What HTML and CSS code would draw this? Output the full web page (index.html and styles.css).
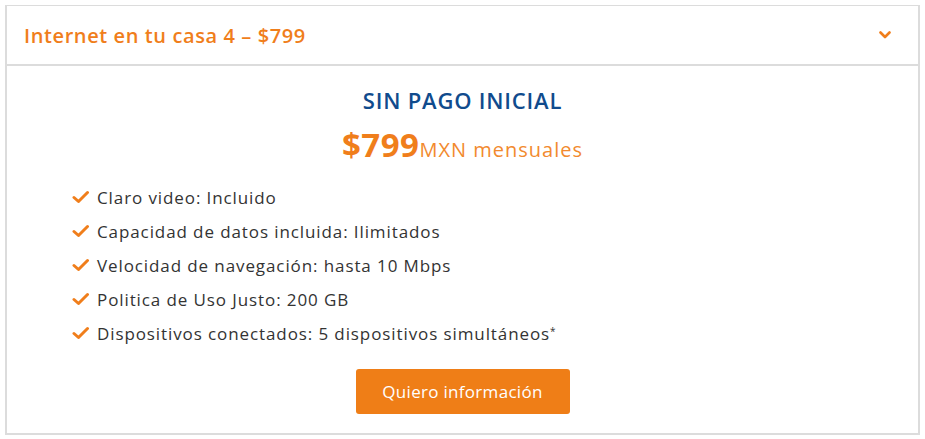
FILE: index.html
```html
<!DOCTYPE html>
<html lang="es">
<head>
<meta charset="utf-8">
<title>Internet en tu casa 4</title>
<link rel="stylesheet" href="styles.css">
</head>
<body>
<div class="accordion">
  <div class="acc-header">
    <span class="acc-title">Internet en tu casa 4 – $799</span>
    <svg class="chev" width="12" height="8" viewBox="0 0 12 8"><path d="M1.5 1.5 L6 6 L10.5 1.5" fill="none" stroke="#f07e1b" stroke-width="2.6" stroke-linecap="round" stroke-linejoin="round"/></svg>
  </div>
  <div class="acc-body">
    <h2 class="plan-tag">SIN PAGO INICIAL</h2>
    <p class="price"><span class="amount">$799</span><span class="per">MXN mensuales</span></p>
    <ul class="features">
      <li><svg class="check" width="18" height="14" viewBox="0 0 18 14"><path d="M2 7.5 L6.5 11.5 L15.5 2.5" fill="none" stroke="#f07e1b" stroke-width="3" stroke-linecap="round" stroke-linejoin="round"/></svg>Claro video: Incluido</li>
      <li><svg class="check" width="18" height="14" viewBox="0 0 18 14"><path d="M2 7.5 L6.5 11.5 L15.5 2.5" fill="none" stroke="#f07e1b" stroke-width="3" stroke-linecap="round" stroke-linejoin="round"/></svg>Capacidad de datos incluida: Ilimitados</li>
      <li><svg class="check" width="18" height="14" viewBox="0 0 18 14"><path d="M2 7.5 L6.5 11.5 L15.5 2.5" fill="none" stroke="#f07e1b" stroke-width="3" stroke-linecap="round" stroke-linejoin="round"/></svg>Velocidad de navegación: hasta 10 Mbps</li>
      <li><svg class="check" width="18" height="14" viewBox="0 0 18 14"><path d="M2 7.5 L6.5 11.5 L15.5 2.5" fill="none" stroke="#f07e1b" stroke-width="3" stroke-linecap="round" stroke-linejoin="round"/></svg>Politica de Uso Justo: 200 GB</li>
      <li><svg class="check" width="18" height="14" viewBox="0 0 18 14"><path d="M2 7.5 L6.5 11.5 L15.5 2.5" fill="none" stroke="#f07e1b" stroke-width="3" stroke-linecap="round" stroke-linejoin="round"/></svg>Dispositivos conectados: 5 dispositivos simultáneos<sup>*</sup></li>
    </ul>
    <div class="cta-row"><a class="cta" href="#">Quiero información</a></div>
  </div>
</div>
</body>
</html>
```
FILE: styles.css
```css
html, body { margin: 0; padding: 0; background: #fff; }
body {
  font-family: "Open Sans", "Liberation Sans", sans-serif;
  padding: 5px 5px 0 5px;
}
.accordion {
  width: 915px;
  border: 1px solid #dcdcdc;
  border-width: 1px 2px 2px 2px;
  box-sizing: border-box;
}
.acc-header {
  height: 58px;
  display: flex;
  align-items: center;
  justify-content: space-between;
  padding: 0 27px 0 17px;
  border-bottom: 2px solid #dcdcdc;
}
.acc-title {
  color: #f07e1b;
  font-size: 20px;
  font-weight: 600;
  letter-spacing: 0.6px;
}
.chev { display: block; }
.acc-body {
  padding: 20px 0 19px 0;
}
.plan-tag {
  margin: 0;
  text-align: center;
  color: #104b8d;
  font-size: 22px;
  font-weight: 600;
  line-height: 28px;
  letter-spacing: 0.8px;
}
.price {
  margin: 12px 0 0 0;
  text-align: center;
  color: #f07e1b;
  line-height: 38px;
}
.amount { font-size: 33px; font-weight: 700; letter-spacing: 0.5px; }
.per { font-size: 20px; font-weight: 400; color: #f28a2e; letter-spacing: 1px; }
.features {
  list-style: none;
  margin: 10px 0 0 0;
  padding: 0 0 0 65px;
}
.features li {
  display: flex;
  align-items: center;
  height: 34px;
  font-size: 17px;
  color: #333;
  letter-spacing: 0.9px;
}
.check { margin-right: 7px; flex: none; }
sup { font-size: 10px; align-self: flex-start; margin-top: 8px; }
.cta-row {
  display: flex;
  justify-content: center;
  margin-top: 19px;
}
.cta {
  display: flex;
  align-items: center;
  justify-content: center;
  width: 214px;
  height: 45px;
  background: #ef7e17;
  color: #fff;
  border-radius: 3px;
  text-decoration: none;
  font-size: 17px;
  letter-spacing: 0.3px;
}
```
